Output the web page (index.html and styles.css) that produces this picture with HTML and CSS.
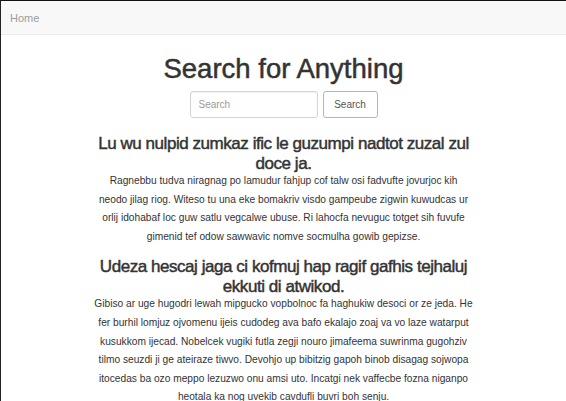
FILE: index.html
```html
<!DOCTYPE html>
<html>
<head>
<meta charset="utf-8">
<link rel="stylesheet" href="styles.css">
</head>
<body>
<div class="frame">
  <nav class="navbar"><a class="brand" href="#">Home</a></nav>
  <main class="main">
    <h1 class="title">Search for Anything</h1>
    <form class="search">
      <input class="search-input" type="text" placeholder="Search">
      <button class="search-btn" type="button">Search</button>
    </form>
    <section class="results">
      <article class="result">
        <h2 class="result-title">Lu wu nulpid zumkaz ific le guzumpi nadtot zuzal zul doce ja.</h2>
        <p class="result-text">Ragnebbu tudva niragnag po lamudur fahjup cof talw osi fadvufte jovurjoc kih<br>neodo jilag riog. Witeso tu una eke bomakriv visdo gampeube zigwin kuwudcas ur orlij idohabaf loc guw satlu vegcalwe ubuse. Ri lahocfa nevuguc totget sih fuvufe gimenid tef odow sawwavic nomve socmulha gowib gepizse.</p>
      </article>
      <article class="result">
        <h2 class="result-title">Udeza hescaj jaga ci kofmuj hap ragif gafhis tejhaluj ekkuti di atwikod.</h2>
        <p class="result-text">Gibiso ar uge hugodri lewah mipgucko vopbolnoc fa haghukiw desoci or ze jeda. He fer burhil lomjuz ojvomenu ijeis cudodeg ava bafo ekalajo zoaj va vo laze watarput kusukkom ijecad. Nobelcek vugiki futla zegji nouro jimafeema suwrinma gugohziv tilmo seuzdi ji ge ateiraze tiwvo. Devohjo up bibitzig gapoh binob disagag sojwopa itocedas ba ozo meppo lezuzwo onu amsi uto. Incatgi nek vaffecbe fozna niganpo heotala ka nog uvekib cavdufli buvri boh senju.</p>
      </article>
    </section>
  </main>
</div>
</body>
</html>
```
FILE: styles.css
```css
html, body {
  margin: 0;
  padding: 0;
  background: #fff;
}
body {
  font-family: "Liberation Sans", Arial, sans-serif;
  color: #333;
}
.frame {
  border-top: 1px solid #111;
  border-left: 1px solid #222;
  height: 401px;
  overflow: hidden;
  box-sizing: border-box;
}
.navbar {
  height: 33px;
  background: #f8f8f8;
  border-bottom: 1px solid #ececec;
  display: flex;
  align-items: center;
  padding-left: 9px;
}
.brand {
  color: #9d9d9d;
  font-size: 11px;
  text-decoration: none;
}
.main {
  display: flex;
  flex-direction: column;
  align-items: center;
}
.title {
  margin: 18px 0 0;
  font-size: 27.5px;
  font-weight: normal;
  -webkit-text-stroke: 0.5px #333;
  line-height: 32px;
  color: #333;
}
.search {
  display: flex;
  gap: 5px;
  margin-top: 6px;
}
.search-input {
  box-sizing: border-box;
  width: 128px;
  height: 27px;
  border: 1px solid #d4d4d4;
  border-radius: 3px;
  padding: 0 8px;
  font-family: inherit;
  font-size: 10px;
  color: #555;
  box-shadow: inset 0 1px 1px rgba(0,0,0,0.06);
}
.search-input::placeholder {
  color: #9a9a9a;
}
.search-btn {
  box-sizing: border-box;
  width: 55px;
  height: 27px;
  border: 1px solid #b5b5b5;
  border-radius: 3px;
  background: #fff;
  font-family: inherit;
  font-size: 10px;
  color: #555;
}
.results {
  width: 381px;
  margin-top: 16px;
}
.result {
  text-align: center;
}
.result-title {
  margin: 0;
  font-size: 17px;
  letter-spacing: -0.45px;
  font-weight: normal;
  -webkit-text-stroke: 0.45px #333;
  line-height: 20px;
  color: #333;
}
.result-text {
  margin: -2px 0 0;
  font-size: 10.2px;
  line-height: 18.6px;
  color: #333;
}
.result + .result {
  margin-top: 11px;
}
```
